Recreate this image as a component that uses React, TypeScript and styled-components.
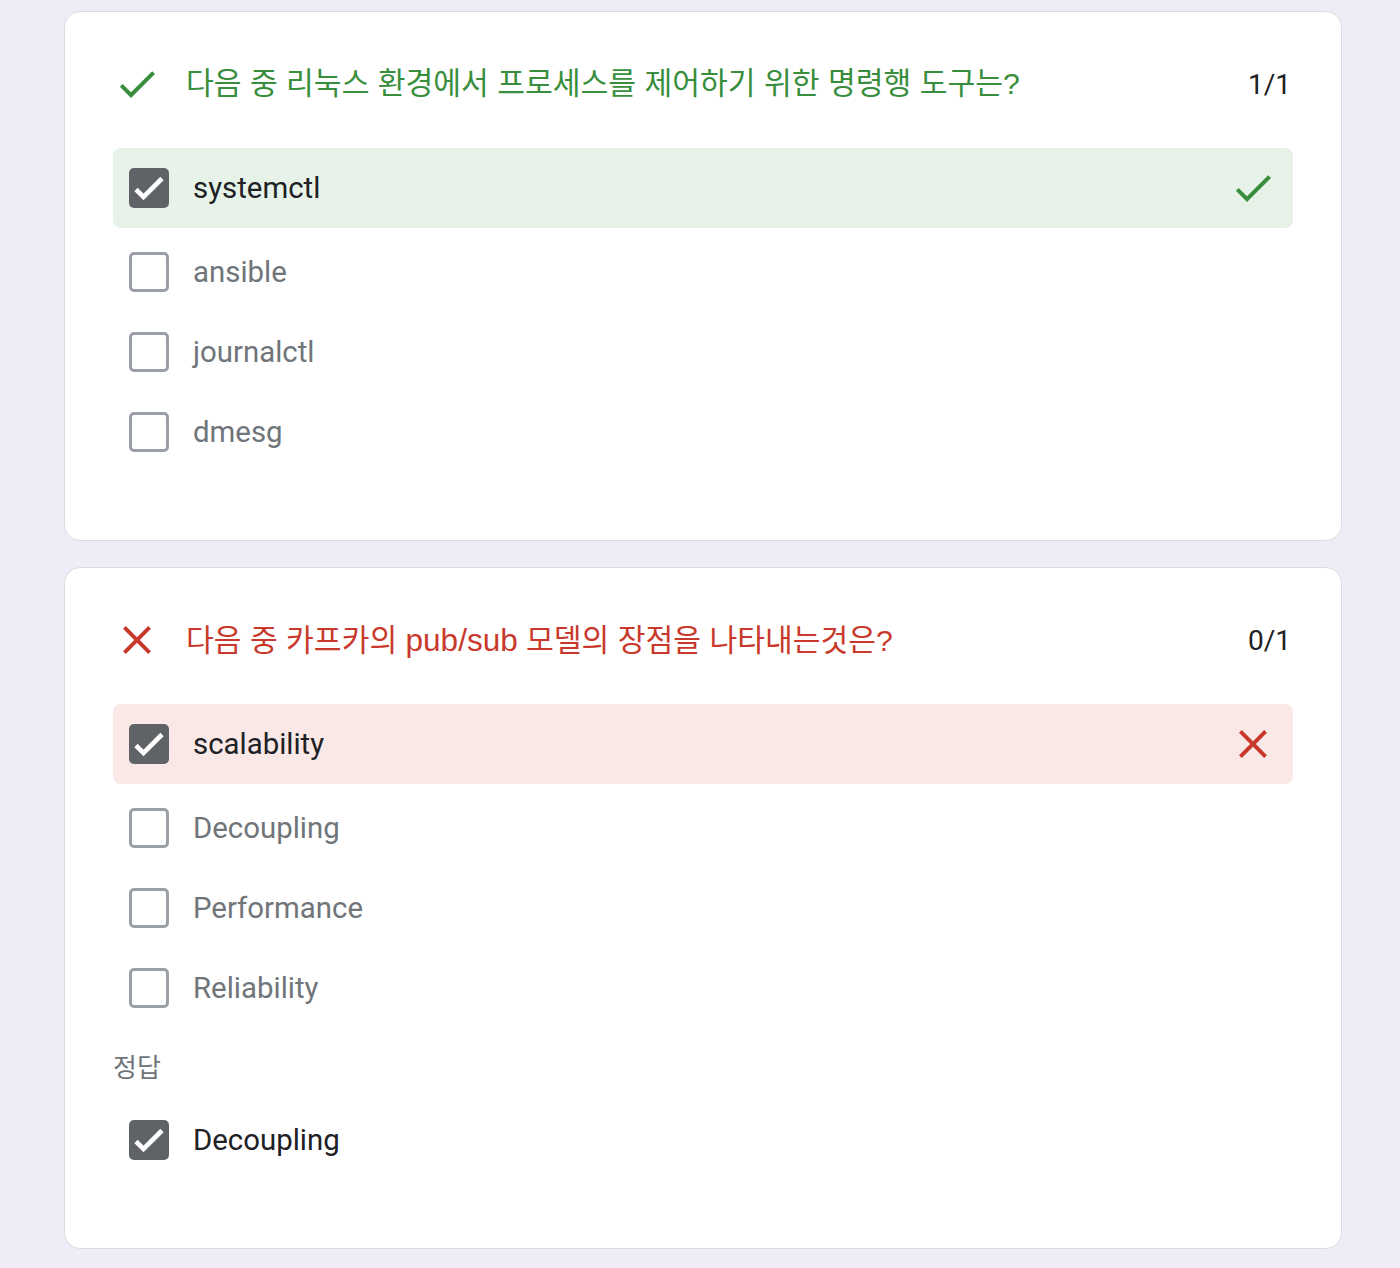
import React from "react";
import styled, { createGlobalStyle } from "styled-components";

const GlobalStyle = createGlobalStyle`
  html, body {
    margin: 0;
    padding: 0;
    background: #efebf7;
  }
  body {
    font-family: Roboto, "Noto Sans CJK KR", sans-serif;
  }
`;

const GREEN = "#388e3c";
const RED = "#c8392c";

const Page = styled.div`
  display: flex;
  flex-direction: column;
  gap: 26px;
  padding: 11px 0 19px 64px;
  min-height: 1268px;
  box-sizing: border-box;
  background: #efebf7;
`;

const Card = styled.section`
  width: 1278px;
  box-sizing: border-box;
  background: #ffffff;
  border: 1px solid #dadce0;
  border-radius: 16px;
  padding: 48px 48px 68px 48px;
  display: flex;
  flex-direction: column;
`;

const Header = styled.div`
  display: flex;
  align-items: center;
  height: 48px;
  margin-bottom: 40px;
`;

const Title = styled.div<{ $tone: "good" | "bad" }>`
  flex: 1;
  margin-left: 25px;
  font-family: "Liberation Sans", "Noto Sans CJK KR", sans-serif;
  font-size: 30.2px;
  line-height: 40px;
  color: ${(p) => (p.$tone === "good" ? GREEN : RED)};
`;

const Latin = styled.span`
  font-size: 31.5px;
`;

const Points = styled.div`
  font-family: Roboto, sans-serif;
  font-size: 28px;
  color: #202124;
  margin-right: 2px;
`;

const Row = styled.div<{ $tone?: "good" | "bad" }>`
  display: flex;
  align-items: center;
  height: 80px;
  padding: 0 16px;
  border-radius: 8px;
  background: ${(p) =>
    p.$tone === "good" ? "#e7f3e9" : p.$tone === "bad" ? "#f9e8e6" : "transparent"};
  margin-bottom: ${(p) => (p.$tone ? "4px" : "0")};
`;

const Box = styled.div<{ $checked?: boolean }>`
  width: 40px;
  height: 40px;
  box-sizing: border-box;
  border-radius: 5px;
  flex: none;
  display: flex;
  align-items: center;
  justify-content: center;
  background: ${(p) => (p.$checked ? "#5f6368" : "transparent")};
  border: ${(p) => (p.$checked ? "none" : "3px solid #9aa0a6")};
`;

const Label = styled.span<{ $checked?: boolean }>`
  flex: 1;
  margin-left: 24px;
  font-family: Roboto, sans-serif;
  font-size: 29.4px;
  color: ${(p) => (p.$checked ? "#202124" : "#70757a")};
`;

const AnswerLabel = styled.div`
  margin: 20px 0 16px 0;
  height: 36px;
  line-height: 36px;
  font-family: "Noto Sans CJK KR", sans-serif;
  font-size: 26px;
  color: #70757a;
`;

const IconSvg = styled.svg`
  width: 48px;
  height: 48px;
  flex: none;
`;

const CheckIcon = ({ color }: { color: string }) => (
  <IconSvg viewBox="0 0 24 24">
    <path fill={color} d="M9 16.17L4.83 12l-1.42 1.41L9 19 21 7l-1.41-1.41z" />
  </IconSvg>
);

const CloseIcon = ({ color }: { color: string }) => (
  <IconSvg viewBox="0 0 24 24">
    <path
      fill={color}
      d="M19 6.41L17.59 5 12 10.59 6.41 5 5 6.41 10.59 12 5 17.59 6.41 19 12 13.41 17.59 19 19 17.59 13.41 12z"
    />
  </IconSvg>
);

const TickMark = () => (
  <svg width="40" height="40" viewBox="0 0 40 40">
    <polyline
      points="7,21.5 14.5,29 33,10.5"
      fill="none"
      stroke="#ffffff"
      strokeWidth="4.6"
      strokeLinecap="butt"
      strokeLinejoin="miter"
    />
  </svg>
);

type Opt = { text: string; checked?: boolean; tone?: "good" | "bad" };

const Option = ({ text, checked, tone }: Opt) => (
  <Row $tone={tone}>
    <Box $checked={checked}>{checked && <TickMark />}</Box>
    <Label $checked={checked}>{text}</Label>
    {tone === "good" && <CheckIcon color={GREEN} />}
    {tone === "bad" && <CloseIcon color={RED} />}
  </Row>
);

export default function App() {
  return (
    <>
      <GlobalStyle />
      <Page>
        <Card>
          <Header>
            <CheckIcon color={GREEN} />
            <Title $tone="good">다음 중 리눅스 환경에서 프로세스를 제어하기 위한 명령행 도구는?</Title>
            <Points>1/1</Points>
          </Header>
          <Option text="systemctl" checked tone="good" />
          <Option text="ansible" />
          <Option text="journalctl" />
          <Option text="dmesg" />
        </Card>
        <Card>
          <Header>
            <CloseIcon color={RED} />
            <Title $tone="bad">
              다음 중 카프카의 <Latin>pub/sub</Latin> 모델의 장점을 나타내는것은?
            </Title>
            <Points>0/1</Points>
          </Header>
          <Option text="scalability" checked tone="bad" />
          <Option text="Decoupling" />
          <Option text="Performance" />
          <Option text="Reliability" />
          <AnswerLabel>정답</AnswerLabel>
          <Option text="Decoupling" checked />
        </Card>
      </Page>
    </>
  );
}
